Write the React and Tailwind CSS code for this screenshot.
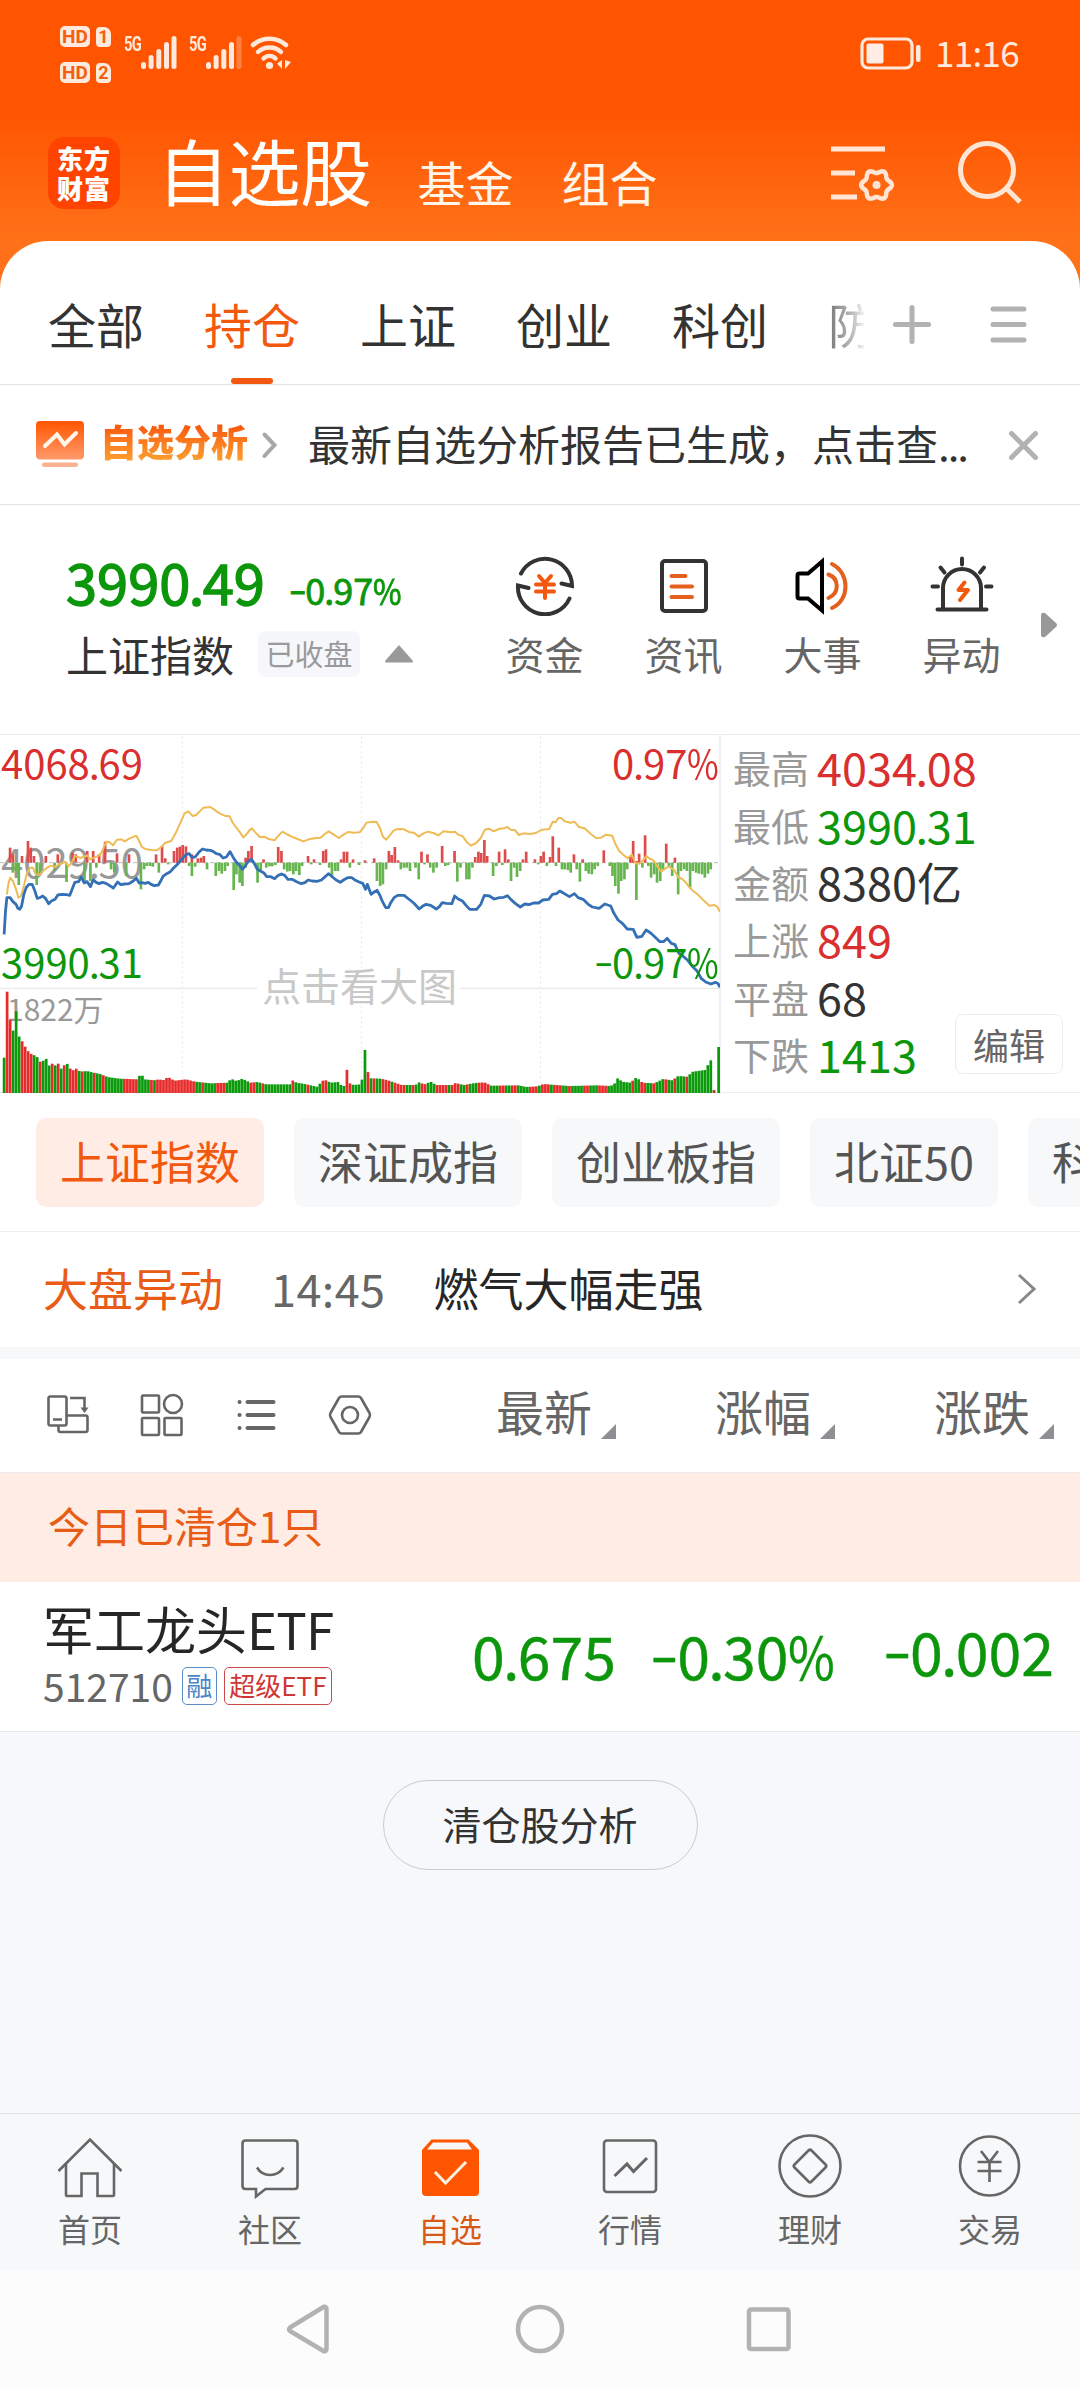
const tabs = ['全部', '持仓', '上证', '创业', '科创'];

const stats = [
  { label: '最高', value: '4034.08', color: 'text-[#d92f2f]' },
  { label: '最低', value: '3990.31', color: 'text-[#0c960c]' },
  { label: '金额', value: '8380亿', color: 'text-[#333333]' },
  { label: '上涨', value: '849', color: 'text-[#d92f2f]' },
  { label: '平盘', value: '68', color: 'text-[#333333]' },
  { label: '下跌', value: '1413', color: 'text-[#0c960c]' },
];

const chips = ['上证指数', '深证成指', '创业板指', '北证50', '科创50'];

const priceLine =
  '9,640 12,570 15,530 22,530 28,542 35,550 39,562 43,565 47,555 52,520 57,500 63,490 70,490 76,510 81,532 87,530 93,525 99,532 106,548 112,540 120,535 126,522 134,520 145,521 152,523 157,505 163,484 171,482 177,468 183,485 190,482 197,497 203,476 209,484 216,488 223,484 231,487 238,493 247,501 256,483 263,491 271,489 281,488 290,480 297,472 303,486 309,485 316,487 323,484 329,490 336,494 345,492 350,480 355,466 363,458 371,452 378,441 385,432 392,421 400,408 406,400 412,398 418,409 425,408 433,394 441,384 449,387 458,388 464,391 471,398 478,400 486,411 493,408 501,392 507,407 514,422 521,432 528,445 535,433 541,420 548,415 554,428 560,444 567,450 574,455 581,467 590,467 598,473 606,463 613,459 620,463 627,475 636,475 646,482 656,488 664,485 671,477 680,480 690,481 700,477 708,467 716,458 724,468 732,477 741,484 748,477 757,470 766,470 774,478 782,483 790,487 796,505 800,490 808,520 815,513 821,508 827,522 833,542 840,560 846,560 851,545 858,530 866,523 880,523 890,534 901,546 913,564 920,556 928,550 938,553 950,564 957,557 963,545 972,547 984,548 990,525 998,534 1007,540 1015,553 1023,565 1038,565 1047,550 1055,523 1066,525 1076,534 1088,530 1097,529 1105,524 1113,536 1122,547 1133,558 1143,549 1152,551 1162,546 1173,546 1182,537 1195,535 1203,520 1212,518 1219,510 1228,517 1240,527 1251,518 1259,530 1270,535 1281,550 1290,558 1305,562 1317,549 1330,555 1337,577 1346,597 1356,608 1366,624 1379,625 1387,649 1398,646 1407,627 1417,636 1427,649 1437,662 1445,662 1453,652 1462,667 1470,671 1478,696 1487,705 1497,717 1507,735 1518,750 1527,772 1537,783 1548,789 1558,784 1564,788 1568,799';

const averageLine =
  '15,520 18,490 22,470 28,480 35,505 40,530 46,525 52,495 58,460 65,440 72,440 77,458 83,462 88,460 95,448 103,440 111,434 120,438 130,430 142,422 149,436 156,425 163,405 175,411 190,403 197,415 206,409 217,403 224,387 231,362 238,363 246,373 254,357 264,355 272,361 282,352 297,344 303,360 309,378 318,385 330,387 341,388 350,380 360,365 373,360 383,335 393,305 402,277 410,271 420,285 427,282 435,271 443,260 458,258 466,265 478,277 489,284 500,286 507,306 516,322 523,335 530,349 537,340 543,328 549,322 557,336 566,348 575,347 585,354 598,358 607,343 615,332 624,339 635,347 648,354 661,361 672,355 685,352 698,350 707,339 716,331 727,341 738,351 748,341 758,333 770,335 783,334 790,323 798,305 807,303 820,302 827,320 834,347 841,356 849,343 857,329 866,324 880,325 892,334 902,335 912,347 922,337 932,332 944,336 955,343 966,331 982,334 991,332 998,341 1008,346 1017,364 1026,374 1037,366 1047,351 1056,326 1065,323 1075,331 1086,324 1097,322 1105,318 1112,326 1121,327 1130,342 1141,337 1153,339 1167,336 1180,326 1196,324 1204,302 1210,304 1216,291 1222,291 1230,301 1242,305 1251,302 1261,318 1273,322 1286,338 1298,351 1309,350 1320,341 1333,344 1340,368 1348,389 1358,402 1367,412 1376,401 1384,427 1393,428 1401,417 1408,405 1415,413 1423,418 1430,433 1440,452 1448,443 1457,437 1468,447 1477,468 1487,475 1495,487 1502,500 1510,510 1520,521 1532,538 1545,554 1556,552 1562,557 1568,573';

// [x, y of the bar's end], measured from the zero axis
const upTicks = [
  [22, 380], [28, 400], [48, 405], [61, 360], [67, 380], [74, 405], [100, 405], [126, 400], [158, 395], [165, 400], [190, 390], [203, 390], [216, 400], [229, 362], [255, 397], [281, 400], [340, 400], [353, 375], [360, 412], [379, 390], [386, 380], [392, 377], [398, 372], [405, 376], [418, 400], [431, 412], [438, 410], [444, 405], [535, 410], [541, 390], [548, 375], [574, 415], [606, 378], [613, 390], [671, 405], [684, 415], [704, 390], [710, 385], [743, 415], [749, 392], [756, 392], [769, 415], [795, 418], [815, 412], [847, 390], [853, 402], [860, 378], [867, 418], [918, 392], [931, 400], [963, 375], [990, 390], [1035, 408], [1042, 392], [1048, 396], [1055, 357], [1061, 405], [1087, 392], [1100, 385], [1107, 415], [1139, 415], [1146, 392], [1165, 415], [1178, 405], [1184, 392], [1198, 408], [1204, 346], [1217, 380], [1250, 400], [1269, 415], [1315, 388], [1373, 405], [1379, 360], [1386, 420], [1392, 398], [1405, 343], [1451, 368], [1470, 410],
];

const downTicks = [
  [28, 455], [35, 450], [41, 492], [80, 492], [87, 460], [119, 450], [145, 483], [184, 490], [197, 480], [210, 440], [242, 445], [249, 455], [275, 465], [307, 505], [314, 445], [320, 435], [327, 435], [333, 437], [346, 455], [366, 430], [412, 435], [418, 465], [425, 437], [451, 445], [470, 465], [477, 450], [483, 458], [490, 450], [496, 435], [509, 507], [515, 460], [522, 485], [528, 495], [535, 440], [561, 485], [568, 450], [580, 440], [587, 436], [593, 436], [600, 432], [619, 445], [626, 452], [632, 450], [639, 460], [645, 450], [652, 462], [658, 435], [678, 430], [697, 432], [717, 440], [723, 465], [730, 450], [736, 450], [762, 440], [782, 432], [821, 480], [828, 495], [834, 490], [841, 445], [873, 445], [880, 440], [886, 440], [893, 450], [905, 440], [912, 475], [925, 430], [937, 440], [944, 455], [951, 440], [970, 435], [976, 432], [996, 482], [1003, 440], [1016, 475], [1022, 475], [1029, 440], [1074, 465], [1081, 435], [1094, 432], [1113, 480], [1120, 440], [1126, 468], [1133, 450], [1172, 430], [1191, 435], [1211, 435], [1224, 445], [1230, 445], [1237, 447], [1243, 455], [1256, 445], [1263, 482], [1276, 450], [1282, 458], [1289, 460], [1295, 445], [1302, 435], [1328, 435], [1334, 465], [1340, 495], [1347, 518], [1353, 480], [1360, 475], [1366, 445], [1386, 537], [1399, 440], [1412, 435], [1418, 470], [1425, 460], [1431, 485], [1438, 480], [1444, 445], [1457, 440], [1464, 465], [1477, 520], [1483, 450], [1490, 445], [1496, 450], [1503, 500], [1509, 450], [1516, 455], [1522, 458], [1529, 460], [1535, 470], [1542, 458], [1548, 445],
];

const volumeProfile = [
  [9, 1010], [15, 805], [22, 895], [28, 935], [35, 868], [41, 945], [48, 960], [54, 975], [61, 990], [67, 998], [80, 1006], [87, 1022], [93, 1022], [99, 1007], [106, 1035], [113, 1027], [119, 1035], [126, 1025], [132, 1045], [145, 1025], [152, 1042], [160, 1048], [165, 1042], [175, 1052], [190, 1050], [203, 1055], [216, 1058], [235, 1068], [260, 1073], [300, 1075], [307, 1055], [314, 1075], [340, 1078], [347, 1073], [353, 1080], [366, 1068], [380, 1079], [405, 1075], [425, 1082], [460, 1087], [496, 1085], [503, 1073], [515, 1080], [528, 1073], [545, 1085], [561, 1083], [580, 1090], [632, 1090], [639, 1076], [645, 1085], [660, 1088], [690, 1097], [704, 1078], [710, 1078], [720, 1085], [736, 1083], [745, 1095], [750, 1095], [756, 1043], [762, 1087], [770, 1092], [785, 1090], [789, 1073], [795, 985], [801, 1052], [808, 1072], [830, 1073], [845, 1078], [860, 1085], [875, 1092], [905, 1092], [912, 1084], [925, 1090], [938, 1082], [950, 1092], [985, 1092], [992, 1086], [1010, 1092], [1035, 1086], [1055, 1084], [1070, 1094], [1130, 1093], [1146, 1098], [1170, 1096], [1184, 1089], [1210, 1092], [1240, 1095], [1300, 1093], [1330, 1095], [1341, 1085], [1347, 1066], [1353, 1082], [1373, 1085], [1386, 1069], [1399, 1085], [1425, 1087], [1444, 1074], [1464, 1078], [1477, 1065], [1496, 1067], [1509, 1052], [1535, 1047], [1548, 1018],
];

const risingRanges = [
  [12, 25], [46, 70], [85, 90], [110, 114], [124, 128], [137, 141], [150, 160], [164, 167], [180, 184], [200, 205], [226, 230], [270, 298], [330, 334], [340, 425], [437, 441], [470, 490], [541, 552], [572, 576], [636, 641], [670, 675], [700, 714], [752, 765], [799, 806], [812, 816], [832, 850], [858, 880], [898, 902], [920, 930], [952, 975], [985, 1000], [1018, 1022], [1040, 1065], [1085, 1100], [1112, 1125], [1150, 1170], [1180, 1198], [1205, 1225], [1240, 1244], [1255, 1258], [1268, 1280], [1305, 1318], [1376, 1382], [1392, 1408], [1420, 1424], [1450, 1454], [1468, 1472], [1495, 1499],
];

function volumeTop(x) {
  const i = volumeProfile.findIndex(([px]) => px >= x);
  if (i <= 0) return volumeProfile[0][1];
  const [x0, y0] = volumeProfile[i - 1];
  const [x1, y1] = volumeProfile[i];
  return y0 + ((y1 - y0) * (x - x0)) / (x1 - x0);
}

const volumeBars = Array.from({ length: 236 }, (_, i) => {
  const x = 9 + i * 6.549;
  return {
    x,
    top: volumeTop(Math.min(x, 1548)),
    rising: risingRanges.some(([a, b]) => x >= a - 1 && x <= b + 1),
  };
});

// six-lobed outline of the settings gear
const gearPoints = Array.from({ length: 72 }, (_, i) => {
  const a = (i * Math.PI) / 36;
  const r = 13.6 + 1.7 * Math.cos(6 * a);
  return `${(50.5 + r * Math.cos(a)).toFixed(2)},${(47 + r * Math.sin(a)).toFixed(2)}`;
}).join(' ');

// Quote figures: long minus, tight decimal point, narrow percent sign
function Quote({ children }) {
  return [...children].map((ch, i) => {
    if (ch === '-') return <span key={i} className="inline-block w-[0.455em] text-left origin-left scale-x-[1.4] -translate-y-[0.05em]">{ch}</span>;
    if (ch === '.') return <span key={i} className="inline-block w-[0.22em] text-center -indent-[0.03em]">{ch}</span>;
    if (ch === '%') return <span key={i} className="inline-block w-[0.79em] text-left origin-left scale-x-[0.86]">{ch}</span>;
    return ch;
  });
}

function Hd({ n }) {
  return (
    <div className="flex items-center gap-1.5">
      <span className="w-[30px] h-[21px] rounded-[5px] bg-[#ffe9dc] text-[#f2600f] flex items-center justify-center text-[19px] font-bold leading-none font-['Roboto',sans-serif]">
        HD
      </span>
      <span className="w-[15px] h-5 mt-0.5 rounded-[4px] rounded-tr-[7px] bg-[#ffe9dc] text-[#f2600f] flex items-center justify-center text-[18px] font-bold leading-none font-['Roboto',sans-serif]">
        {n}
      </span>
    </div>
  );
}

function Signal({ weak }) {
  return (
    <div className="flex">
      <span className="w-[17px] h-[15px] text-[21px] leading-[17px] font-bold tracking-[-1px] text-[#ffe9dc] font-['Roboto',sans-serif]">
        <span className="inline-block origin-left scale-x-70">5G</span>
      </span>
      <svg width="36" height="34" viewBox="0 0 36 34" fill="#ffe9dc">
        <rect x="0" y="26" width="5" height="7" rx="2.5" />
        <rect x="7.6" y="19" width="5" height="14" rx="2.5" />
        <rect x="15.3" y="13" width="5" height="20" rx="2.5" />
        <rect x="23" y="6" width="5" height="27" rx="2.5" />
        <rect x="30.5" y="0" width="5" height="33" rx="2.5" opacity={weak ? 0.3 : 1} />
      </svg>
    </div>
  );
}

function StatusBar() {
  return (
    <div className="h-[110px] flex items-start pl-[60px] pr-[61px]">
      <div className="flex flex-col gap-[14px] pt-[25px] w-[64px]">
        <Hd n="1" />
        <Hd n="2" />
      </div>
      <div className="flex pt-9 gap-3">
        <Signal />
        <Signal weak />
      </div>
      <svg className="mt-9 ml-2" width="44" height="34" viewBox="0 0 44 34" fill="none" stroke="#ffe9dc" strokeWidth="4.5" strokeLinecap="round">
        <path d="M3 9 C12 0.500 27 0.500 36 9" />
        <path d="M8 16 C14 10 25 10 31 16" />
        <path d="M13.500 22.500 C17 19 22 19 25.500 22.500" />
        <circle cx="19.500" cy="29.500" r="3.600" fill="#ffe9dc" stroke="none" />
        <path d="M32 24v9l-5-5.500zM35 24v9l6-7z" fill="#ffe9dc" stroke="none" />
      </svg>
      <svg className="mt-9 ml-auto" width="62" height="36" viewBox="0 0 62 36" fill="none">
        <rect x="2" y="3" width="50" height="29" rx="6" stroke="#ffe9dc" strokeWidth="3.200" />
        <rect x="6.500" y="7.500" width="17" height="20" rx="2" fill="#ffece4" />
        <rect x="56" y="9" width="4.500" height="17" rx="2" fill="#ffe9dc" />
      </svg>
      <span className="mt-[33px] ml-[13px] text-[35px] leading-[38px] tracking-[-0.7px] text-[#ffe9dc]">11:16</span>
    </div>
  );
}

function TitleBar() {
  return (
    <div className="h-[131px] flex items-start pl-12 pr-14">
      <div className="w-[72px] h-[72px] mt-[27px] rounded-[16px] bg-[#ff4400] text-white flex flex-col items-center justify-center text-[26px] leading-[30px] font-black tracking-[1px]">
        <span>东方</span>
        <span>财富</span>
      </div>
      <span className="ml-[37px] mt-[23px] text-[72px] leading-[72px] tracking-[-0.5px] text-white">自选股</span>
      <span className="ml-[46px] mt-[46px] text-[48px] leading-[50px] text-[#fff5e8]">基金</span>
      <span className="ml-[48px] mt-[46px] text-[48px] leading-[50px] text-[#fff5e8]">组合</span>
      <svg className="ml-auto mt-[28px]" width="70" height="70" viewBox="0 0 70 70" fill="none" stroke="#ffe6d4" strokeWidth="5">
        <path d="M5 11h54M5 35h24M5 59h26" />
        <polygon points={gearPoints} strokeWidth="4.500" strokeLinejoin="round" />
        <circle cx="50.500" cy="47" r="4" fill="#ffe6d4" stroke="none" />
      </svg>
      <svg className="ml-[58px] mt-[28px]" width="70" height="70" viewBox="0 0 70 70" fill="none" stroke="#ffe6d4" strokeWidth="5">
        <circle cx="33" cy="32" r="26.500" />
        <path d="M52 50l14 14" />
      </svg>
    </div>
  );
}

function Tabs() {
  return (
    <div className="h-[144px] border-b border-[#e4e4e4] flex items-start">
      <div className="relative h-full w-[864px] pl-12 flex gap-[60px] overflow-hidden">
        {tabs.map((tab) => (
          <div key={tab} className={`h-full shrink-0 flex flex-col items-center ${tab === '持仓' ? 'text-[#f2590f]' : 'text-[#333333]'}`}>
            <span className="mt-[52px] text-[48px] leading-[60px]">{tab}</span>
            {tab === '持仓' && <span className="mt-auto w-[42px] h-[6px] rounded-full bg-[#f2590f]" />}
          </div>
        ))}
        <span className="mt-[52px] text-[48px] leading-[60px] shrink-0 bg-linear-to-r from-[#777] via-[#bbb] via-50% to-white to-80% bg-clip-text text-transparent">防</span>
      </div>
      <svg className="mt-[60px] ml-6" width="48" height="48" viewBox="0 0 48 48" stroke="#b2b2b2" strokeWidth="5" strokeLinecap="round">
        <path d="M7.500 23.500h33M24 6.500v34" />
      </svg>
      <svg className="mt-[60px] ml-[48px]" width="48" height="48" viewBox="0 0 48 48" stroke="#b2b2b2" strokeWidth="5" strokeLinecap="round">
        <path d="M9 8h31M9 23.500h31M9 39h31" />
      </svg>
    </div>
  );
}

function AnalysisNotice() {
  return (
    <div className="h-[120px] border-b border-[#e4e4e4] flex items-center pl-9 pr-9">
      <svg width="48" height="48" viewBox="0 0 48 48" fill="none">
        <defs>
          <linearGradient id="notice" x1="0" y1="0" x2="0" y2="1">
            <stop offset="0" stopColor="#ff5500" />
            <stop offset="1" stopColor="#ff9a6c" />
          </linearGradient>
        </defs>
        <rect x="0" y="0" width="48" height="38.500" rx="4" fill="url(#notice)" />
        <rect x="6" y="41.500" width="36" height="4.500" rx="2" fill="#fbb292" />
        <path d="M9 25L21 13.500l7.500 10L40 12" stroke="#fff5e8" strokeWidth="4" strokeLinecap="round" />
      </svg>
      <span className="ml-[16px] -mt-2 text-[37px] leading-[54px] font-black bg-linear-to-b from-[#f8560c] from-20% to-[#fb9c2e] to-85% bg-clip-text text-transparent">自选分析</span>
      <svg className="ml-3" width="20" height="30" viewBox="0 0 20 30" fill="none" stroke="#a8a8a8" strokeWidth="4" strokeLinecap="round">
        <path d="M4.500 4.500L14.500 15 4.500 26" />
      </svg>
      <span className="ml-[28px] -mt-1 text-[42px] leading-[60px] text-[#333333]">
        最新自选分析报告已生成，点击查<span className="tracking-[-2px]">...</span>
      </span>
      <svg className="ml-auto" width="40" height="40" viewBox="0 0 40 40" stroke="#b2b2b2" strokeWidth="5" strokeLinecap="round">
        <path d="M7.500 8.500l24 24M31.500 8.500l-24 24" />
      </svg>
    </div>
  );
}

function FundIcon() {
  return (
    <svg width="66" height="60" viewBox="0 0 66 60" fill="none" stroke="#333333" strokeWidth="4" strokeLinecap="round">
      <path d="M9 17.500 A27 27 0 0 1 60 30 L49.500 27.500" />
      <path d="M57.500 42.500 A27 27 0 0 1 6 29.500 L16.500 32" />
      <path d="M27 20l6 7 6-7M24 28.500h18M24 35.500h18M33 27v15" stroke="#f2590f" />
    </svg>
  );
}

function NewsIcon() {
  return (
    <svg width="66" height="60" viewBox="0 0 66 60" fill="none" stroke="#333333" strokeWidth="4" strokeLinecap="round">
      <rect x="11" y="5" width="44" height="50" rx="3" />
      <path d="M20.500 20h14M20.500 30.500h20.500M20.500 41h20.500" stroke="#e5601c" />
    </svg>
  );
}

function EventIcon() {
  return (
    <svg width="66" height="60" viewBox="0 0 66 60" fill="none" stroke="#000" strokeWidth="4">
      <path d="M9.500 17.500h8.500L32 5.500v49L18 42.500H9.500a2 2 0 0 1-2-2v-21a2 2 0 0 1 2-2z" />
      <path d="M38.500 18.500c11 4 11 19 0 23.500M42 8c18 9 18 36 0 44" stroke="#e5601c" strokeLinecap="round" />
    </svg>
  );
}

function AlertIcon() {
  return (
    <svg width="66" height="60" viewBox="0 0 66 60" fill="none" stroke="#333333" strokeWidth="4" strokeLinecap="round">
      <path d="M14 52V32a19 19 0 0 1 38 0v20M8.500 53.500h49M33 2.500v6M3.500 30.500h5.500M57 30.500h5.500M11.500 11.500l4 5M55 11.500l-4 5" />
      <path d="M35.500 26.500L29.500 34h9.500L31 44" stroke="#f2590f" strokeLinejoin="round" />
    </svg>
  );
}

const shortcuts = [
  { label: '资金', Icon: FundIcon },
  { label: '资讯', Icon: NewsIcon },
  { label: '大事', Icon: EventIcon },
  { label: '异动', Icon: AlertIcon },
];

function IndexSummary() {
  return (
    <div className="h-[229px] flex items-start">
      <div className="w-[475px] pl-[66px] pt-[38px]">
        <div className="flex items-baseline text-[#0c960c] leading-[76px] h-[80px]">
          <span className="text-[56px] [-webkit-text-stroke:1.4px]"><Quote>3990.49</Quote></span>
          <span className="ml-[24px] text-[36px] [-webkit-text-stroke:0.8px]"><Quote>-0.97%</Quote></span>
        </div>
        <div className="flex items-center h-[62px]">
          <span className="text-[42px] leading-[60px] text-[#333333]">上证指数</span>
          <span className="ml-6 w-[102px] h-[46px] rounded-[7px] bg-[#f6f7fa] text-[#9a9a9a] text-[29px] leading-[44px] text-center">已收盘</span>
          <svg className="ml-[25px]" width="28" height="18" viewBox="0 0 28 18" fill="#999999">
            <path d="M14 0l14 16q0 1.500-1 1.500H1Q0 17.500 0 16z" />
          </svg>
        </div>
      </div>
      <div className="flex pt-[51px]">
        {shortcuts.map(({ label, Icon }) => (
          <div key={label} className="w-[139px] flex flex-col items-center">
            <Icon />
            <span className="mt-[9px] text-[39px] leading-[56px] text-[#666666]">{label}</span>
          </div>
        ))}
      </div>
      <svg className="mt-[107px] ml-[10px]" width="17" height="26" viewBox="0 0 17 26" fill="#999999">
        <path d="M0 3Q0 0 4 1L15 11q2 2 0 4L4 25Q0 26 0 23z" />
      </svg>
    </div>
  );
}

function IntradayChart() {
  return (
    <div className="relative w-[721px] h-[359px] border-r-2 border-[#f1f1f4] text-[40px] leading-[48px]">
      <span className="absolute left-px top-[102px] text-[#999999]"><Quote>4029.50</Quote></span>
      <span className="absolute left-[7px] top-[249px] text-[30px] text-[#999999]">1822万</span>
      <svg className="absolute inset-0" width="720" height="359" viewBox="0 42 1568 1077" preserveAspectRatio="none" fill="none">
        {[397, 787, 1177].map((x) => (
          <path key={x} d={`M${x} 46V1115`} stroke="#e6e6e6" strokeWidth="1" strokeDasharray="2 3" vectorEffect="non-scaling-stroke" />
        ))}
        <path d="M0 802H560M1003 802H1568" stroke="#e9e9e9" strokeWidth="1.200" vectorEffect="non-scaling-stroke" />
        <path d="M0 425H1568" stroke="#bbbbbb" strokeWidth="1" strokeDasharray="4 3" vectorEffect="non-scaling-stroke" />
        {upTicks.map(([x, y]) => (
          <rect key={x} x={x - 3} y={y} width="5.800" height={425 - y} fill="#df4a4a" />
        ))}
        {downTicks.map(([x, y]) => (
          <rect key={x} x={x - 3} y="425" width="5.800" height={y - 425} fill="#66b54e" />
        ))}
        {volumeBars.map(({ x, top, rising }) => (
          <rect key={x} x={x - 3} y={top} width="5.900" height={1116 - top} fill={rising ? '#e62b2b' : '#0c9a0c'} />
        ))}
        <rect x="1552" y="1107" width="6" height="9" fill="#b04020" />
        <rect x="1562" y="978" width="6" height="138" fill="#0c9a0c" />
        <polyline points={averageLine} stroke="#eebb55" strokeWidth="2" strokeLinejoin="round" vectorEffect="non-scaling-stroke" />
        <polyline points={priceLine} stroke="#3470b5" strokeWidth="2.800" strokeLinejoin="round" vectorEffect="non-scaling-stroke" />
      </svg>
      <span className="absolute left-px top-[3px] text-[#d92f2f]"><Quote>4068.69</Quote></span>
      <span className="absolute right-0 top-[3px] text-[#d92f2f]"><Quote>0.97%</Quote></span>
      <span className="absolute left-px top-[202px] text-[#0c960c]"><Quote>3990.31</Quote></span>
      <span className="absolute right-0 top-[202px] text-[#0c960c]"><Quote>-0.97%</Quote></span>
      <span className="absolute left-[262px] top-[225px] text-[39px] text-[#c8c8c8]">点击看大图</span>
    </div>
  );
}

function IndexPanel() {
  return (
    <div className="relative h-[359px] border-t border-b border-[#ececec] flex box-border">
      <IntradayChart />
      <div className="pl-3 pt-[3px]">
        {stats.map(({ label, value, color }) => (
          <div key={label} className="flex items-center h-[57.4px]">
            <span className="text-[38px] leading-[57px] text-[#999999]">{label}</span>
            <span className={`ml-[8px] text-[45px] leading-[57px] ${color}`}><Quote>{value}</Quote></span>
          </div>
        ))}
      </div>
      <button className="absolute right-[17px] bottom-[18px] w-[108px] h-[60px] rounded-[8px] border-[1.5px] border-[#ececec] bg-white text-[36px] leading-[52px] text-[#666666]">
        编辑
      </button>
    </div>
  );
}

function IndexChips() {
  return (
    <div className="h-[139px] border-b border-[#ececec] flex gap-[30px] pl-9 pt-[25px] overflow-hidden">
      {chips.map((chip, i) => (
        <span
          key={chip}
          className={`h-[89px] shrink-0 px-6 rounded-[10px] text-[45px] leading-[86px] ${
            i === 0 ? 'bg-[#ffede5] text-[#f2590f]' : 'bg-[#f7f8fa] text-[#555555]'
          }`}
        >
          {chip}
        </span>
      ))}
    </div>
  );
}

function MarketAlert() {
  return (
    <div className="h-[127px] border-b-12 border-[#f6f8fa] flex items-center pl-[43px] pr-[42px] text-[45px] leading-[60px]">
      <span className="-mt-[3px] text-[#e85c16]">大盘异动</span>
      <span className="-mt-[3px] ml-[48px] text-[#666666] tracking-[0.4px]">14:45</span>
      <span className="-mt-[3px] ml-[48px] text-[#262626]">燃气大幅走强</span>
      <svg className="ml-auto -mt-0.5" width="22" height="34" viewBox="0 0 22 34" fill="none" stroke="#888888" strokeWidth="3">
        <path d="M3 3l15 14L3 31" />
      </svg>
    </div>
  );
}

function ListHeader() {
  return (
    <div className="h-[114px] flex items-center border-b border-[#ececec] bg-white">
      <div className="w-[397px] pl-[46px] flex items-center gap-[50px] shrink-0 -mt-0.5">
        <svg width="44" height="44" viewBox="0 0 44 44" fill="none" stroke="#666666" strokeWidth="2.600">
          <rect x="2.500" y="3.500" width="18" height="29" rx="2" />
          <path d="M7 26.500h9M24 5h14.500v12M21 22.500h18.500a2 2 0 0 1 2 2V37a2 2 0 0 1-2 2h-25a2 2 0 0 1-2-2v-4" />
          <path d="M34.500 14.500h8L38.500 20z" fill="#666666" stroke="none" />
        </svg>
        <svg width="44" height="44" viewBox="0 0 44 44" fill="none" stroke="#666666" strokeWidth="2.600">
          <rect x="2" y="2.500" width="17" height="17" rx="1" />
          <circle cx="33" cy="11" r="9" />
          <rect x="2" y="25" width="17" height="17" rx="1" />
          <rect x="24.500" y="25" width="17" height="17" rx="1" />
        </svg>
        <svg width="44" height="44" viewBox="0 0 44 44" fill="none" stroke="#666666" strokeWidth="4" strokeLinecap="round">
          <path d="M13.500 9h26M13.500 22h26M13.500 35h26M5.500 9h.1M5.500 22h.1M5.500 35h.1" />
        </svg>
        <svg width="44" height="44" viewBox="0 0 44 44" fill="none" stroke="#666666" strokeWidth="2.600" strokeLinejoin="round">
          <path d="M13.500 3.500h17q1.500 0 2.500 1.500l8.500 15q1 2 0 4L33 39q-1 1.500-2.500 1.500h-17q-1.500 0-2.500-1.500L2.500 24q-1-2 0-4L11 5q1-1.500 2.500-1.500z" />
          <circle cx="22" cy="22" r="8" />
        </svg>
      </div>
      {['最新', '涨幅', '涨跌'].map((col) => (
        <div key={col} className="w-[219px] flex items-end justify-end h-[60px] -mt-[7px]">
          <span className="text-[48px] leading-[64px] h-[64px] text-[#666666]">{col}</span>
          <svg className="ml-[9px] mb-[3px]" width="15" height="15" viewBox="0 0 15 15">
            <path d="M15 0v15H0z" fill="#8e8e93" />
          </svg>
        </div>
      ))}
    </div>
  );
}

function StockRow() {
  return (
    <div className="h-[150px] bg-white border-b border-[#e6e9ec] flex text-[#0c960c]">
      <div className="w-[397px] pl-[43px] shrink-0">
        <div className="mt-[10px] text-[51px] leading-[72px] text-[#262626]">
          军工龙头<span className="tracking-[-0.8px]">ETF</span>
        </div>
        <div className="flex items-center h-[44px]">
          <span className="text-[39px] leading-[40px] -mt-0.5 text-[#666666]">512710</span>
          <span className="ml-[9px] w-[35px] h-[38px] rounded-[5px] border border-[#5b8fc5] text-[#4a86c5] text-[26px] leading-[33px] text-center">融</span>
          <span className="ml-[7px] w-[108px] h-[38px] rounded-[5px] border border-[#cc4a4a] text-[#cf3636] text-[26px] leading-[33px] flex justify-center whitespace-nowrap">超级ETF</span>
        </div>
      </div>
      <span className="w-[219px] text-right text-[59px] leading-[146px] [-webkit-text-stroke:0.4px]"><Quote>0.675</Quote></span>
      <span className="w-[219px] text-right text-[59px] leading-[146px] [-webkit-text-stroke:0.4px]"><Quote>-0.30%</Quote></span>
      <span className="w-[219px] text-right text-[59px] leading-[138px] [-webkit-text-stroke:0.4px]"><Quote>-0.002</Quote></span>
    </div>
  );
}

const navProps = { width: 66, height: 66, viewBox: '0 0 66 66', fill: 'none', stroke: '#666666', strokeWidth: 2.6 };

const navItems = [
  {
    label: '首页',
    icon: (
      <svg {...navProps}>
        <path d="M1.500 38L33 6.500 64.500 38" />
        <path d="M9 30.500V62q0 1 1 1h14.500V40.500h16V63H56q1 0 1-1V30.500" />
      </svg>
    ),
  },
  {
    label: '社区',
    icon: (
      <svg {...navProps}>
        <path d="M8.500 7.500h49q3 0 3 3V53q0 3-3 3H28.500l-9.500 7.500V56H8.500q-3 0-3-3V10.500q0-3 3-3z" />
        <path d="M20 34.500c6 10 20 10 26.500 0" />
      </svg>
    ),
  },
  {
    label: '自选',
    active: true,
    icon: (
      <svg {...navProps} stroke="none">
        <path d="M14.500 6.500h37L62 17v42q0 4-4 4H9q-4 0-4-4V17z" fill="#ff5500" />
        <path d="M16 9.500h34l5 7H10z" fill="#f8f8fa" />
        <path d="M18 39l10.500 11L49 29" stroke="#fff0e0" strokeWidth="3" />
      </svg>
    ),
  },
  {
    label: '行情',
    icon: (
      <svg {...navProps}>
        <rect x="7" y="7.500" width="52" height="51.500" rx="3" />
        <path d="M17.500 43L30 31l6.500 7.500L50 25" strokeWidth="3" />
      </svg>
    ),
  },
  {
    label: '理财',
    icon: (
      <svg {...navProps}>
        <circle cx="33" cy="33" r="30.500" />
        <path d="M31.500 17.500q1.500-1.500 3 0l14 14q1.500 1.500 0 3l-14 14q-1.500 1.500-3 0l-14-14q-1.500-1.500 0-3z" />
      </svg>
    ),
  },
  {
    label: '交易',
    icon: (
      <svg {...navProps}>
        <circle cx="32.500" cy="33" r="29.500" />
        <path d="M24 18l8.500 11L41 18M20.500 29h24M20.500 38h24M32.500 29v20" />
      </svg>
    ),
  },
];

function BottomNav() {
  return (
    <div className="h-[157px] bg-[#f7f8fa] border-t border-[#e2e4e6] flex">
      {navItems.map(({ label, icon, active }) => (
        <div key={label} className="w-[180px] flex flex-col items-center pt-[19px]">
          {icon}
          <span className={`mt-[7px] text-[32px] leading-[44px] ${active ? 'text-[#d95a18]' : 'text-[#666666]'}`}>{label}</span>
        </div>
      ))}
    </div>
  );
}

function SystemNav() {
  return (
    <div className="h-[118px] bg-[#fcfcfc] flex justify-center gap-[174px] pt-[32px]">
      <svg width="54" height="54" viewBox="0 0 54 54" fill="none" stroke="#b2b2b2" strokeWidth="4.500" strokeLinejoin="round">
        <path d="M5 25.500L38.500 5q3-1 3 2v40q0 3-3 2L5 29q-2-1.500 0-3.500z" />
      </svg>
      <svg width="54" height="54" viewBox="0 0 54 54" fill="none" stroke="#b2b2b2" strokeWidth="4.500">
        <circle cx="27" cy="27" r="22" />
      </svg>
      <svg width="54" height="54" viewBox="0 0 54 54" fill="none" stroke="#b2b2b2" strokeWidth="4.500">
        <rect x="8" y="7.500" width="39.500" height="39.500" rx="2" />
      </svg>
    </div>
  );
}

export default function App() {
  return (
    <div className="w-[1080px] h-[2388px] overflow-hidden flex flex-col bg-[#f6f8fb] font-['Noto_Sans_CJK_SC',sans-serif] whitespace-nowrap">
      <div className="bg-linear-to-b from-[#ff5500] from-[115px] to-[#ff7118] to-[241px]">
        <StatusBar />
        <TitleBar />
        <div className="bg-white rounded-t-[48px]">
          <Tabs />
          <AnalysisNotice />
        </div>
      </div>
      <div className="bg-white">
        <IndexSummary />
        <IndexPanel />
        <IndexChips />
        <MarketAlert />
      </div>
      <ListHeader />
      <div className="h-[109px] bg-[#ffede5] pl-12 text-[42px] leading-[104px] text-[#e85c16]">今日已清仓1只</div>
      <StockRow />
      <div className="flex justify-center pt-[48px]">
        <button className="w-[315px] h-[90px] rounded-full border border-[#c9cbce] text-[39px] leading-[82px] text-[#333333]">
          <span className="block -mt-1">清仓股分析</span>
        </button>
      </div>
      <div className="mt-auto">
        <BottomNav />
        <SystemNav />
      </div>
    </div>
  );
}
